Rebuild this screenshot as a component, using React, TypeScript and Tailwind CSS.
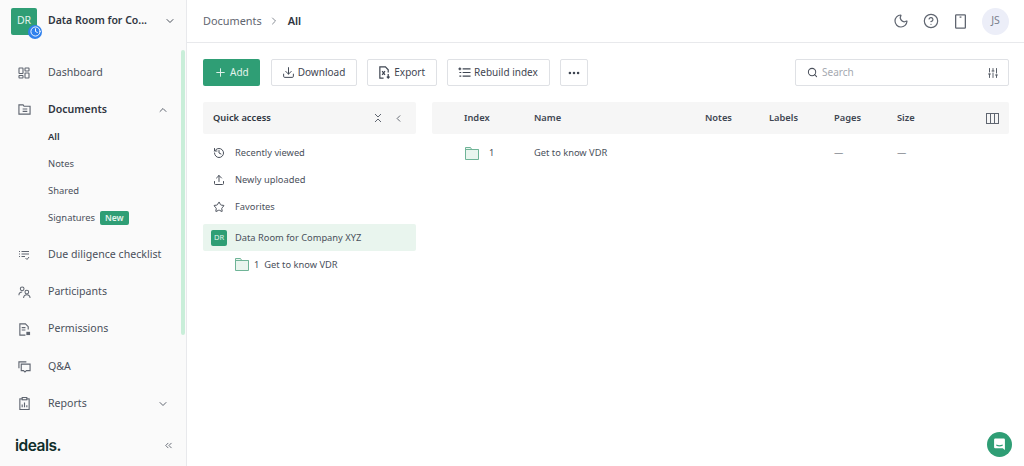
import {
  ChevronDown,
  ChevronLeft,
  ChevronRight,
  ChevronUp,
  ChevronsLeft,
  CircleHelp,
  Clock,
  Download,
  Ellipsis,
  History,
  Moon,
  Plus,
  Search,
  SlidersVertical,
  Star,
  Upload,
} from "lucide-react";

const font = "font-['Noto_Sans','Open_Sans',sans-serif]";

function FolderIcon({ className }: { className?: string }) {
  return (
    <svg viewBox="0 0 14 13" className={className} fill="none">
      <path d="M.5 12.500V.5h5l1.200 2h6.800v10z" fill="#e9f5ee" stroke="#6fb497" />
      <path d="M.5 2.500h13" stroke="#6fb497" />
    </svg>
  );
}

function DashboardIcon() {
  return (
    <svg viewBox="0 0 12 12" className="h-3 w-3" fill="none" stroke="#5f6570" strokeWidth="1.100">
      <rect x="1" y="1" width="4" height="5.500" rx=".4" />
      <rect x="7" y="1" width="4" height="3" rx=".4" />
      <rect x="1" y="8.500" width="4" height="2.500" rx=".4" />
      <rect x="7" y="6" width="4" height="5" rx=".4" />
    </svg>
  );
}

function DocIcon() {
  return (
    <svg viewBox="0 0 14 14" className="h-[13px] w-[13px]" fill="none" stroke="#5f6570" strokeWidth="1.200">
      <path d="M1 2h4.500l1 1.500H13v8.500H1z" />
      <path d="M5 6.500h5M5 9h5" />
    </svg>
  );
}

function ChecklistIcon() {
  return (
    <svg viewBox="0 0 12 12" className="h-3 w-3" fill="none" stroke="#5f6570" strokeWidth="1">
      <path d="M1 2.500h1M3.500 2.500H11M1 5h1M3.500 5H11M1 7.500h1M3.500 7.500H7" />
      <path d="M7.500 9l1.500 1.500L11 8" />
    </svg>
  );
}

function ParticipantsIcon() {
  return (
    <svg viewBox="0 0 14 14" className="h-[13px] w-[13px]" fill="none" stroke="#5f6570" strokeWidth="1.100">
      <circle cx="4.500" cy="3" r="2" />
      <path d="M1 10c0-2.500 1.500-3.500 3.500-3.500" />
      <circle cx="9.500" cy="6.500" r="2" />
      <path d="M6 13c.2-2.500 1.500-3.500 3.500-3.500s3.300 1 3.500 3.500" />
    </svg>
  );
}

function PermissionsIcon() {
  return (
    <svg viewBox="0 0 14 14" className="h-[13px] w-[13px]" fill="none" stroke="#5f6570" strokeWidth="1.200">
      <path d="M8 13H2V1h6l3 3v3" />
      <path d="M4 5h4M4 7.500h4" />
      <rect x="9" y="9.500" width="4" height="3.500" fill="#5f6570" stroke="none" />
    </svg>
  );
}

function QaIcon() {
  return (
    <svg viewBox="0 0 14 14" className="h-[13px] w-[13px]" fill="none" stroke="#5f6570" strokeWidth="1.200">
      <path d="M1 9V2h8" />
      <path d="M3.500 4.500H13v7H9l-1.500 1.500L6 11.500H3.500z" />
    </svg>
  );
}

function ReportsIcon() {
  return (
    <svg viewBox="0 0 14 14" className="h-[13px] w-[13px]" fill="none" stroke="#5f6570" strokeWidth="1.200">
      <rect x="2" y="2" width="10" height="11.500" />
      <rect x="4.500" y=".5" width="5" height="2.500" fill="#fafafa" />
      <path d="M4.500 11V8M7 11V6M9.500 11V9" />
    </svg>
  );
}

function ExportIcon() {
  return (
    <svg viewBox="0 0 14 14" className="h-[13px] w-[13px]" fill="none" stroke="#3f4652" strokeWidth="1.300">
      <path d="M6 13H2V1h6l3 3v3" />
      <path d="M4.500 5.500l3 4M7.500 5.500l-3 4" />
      <path d="M11 8.500V13M9.500 11.500l1.500 1.500 1.500-1.500" />
    </svg>
  );
}

function RebuildIcon() {
  return (
    <svg viewBox="0 0 14 14" className="h-[13px] w-[13px]" fill="none" stroke="#3f4652" strokeWidth="1.300">
      <path d="M5 3h8.500M5 7h8.500M5 11h8.500" />
      <path d="M.5 3h3M2 1.500v3M1.500 7h2M1.500 11h2" />
    </svg>
  );
}

function CollapseIcon() {
  return (
    <svg viewBox="0 0 12 12" className="h-3 w-3" fill="none" stroke="#5f6570" strokeWidth="1">
      <path d="M3 2l3 3 3-3M3 10l3-3 3 3" />
    </svg>
  );
}

function DeviceIcon() {
  return (
    <svg viewBox="0 0 12 16" className="h-[15px] w-[11px]" fill="none" stroke="#5f6570" strokeWidth="1.400">
      <rect x=".7" y=".7" width="10.600" height="14.600" rx=".8" />
      <path d="M5 3.200h2" />
    </svg>
  );
}

function ColumnsIcon() {
  return (
    <svg viewBox="0 0 13 13" className="h-[13px] w-[13px]" fill="none" stroke="#5f6570" strokeWidth="1">
      <rect x=".5" y="1.500" width="12" height="10" />
      <path d="M4.500 1.500v10M8.500 1.500v10" />
    </svg>
  );
}

function ChatIcon() {
  return (
    <svg viewBox="0 0 12 12" className="h-[13px] w-[13px]">
      <path d="M1 1.500A1 1 0 0 1 2 .5h8a1 1 0 0 1 1 1v9.500L9 9.500H2a1 1 0 0 1-1-1z" fill="#fff" />
      <path d="M3 6.500q3 1.500 6 0" stroke="#2f9e75" fill="none" />
    </svg>
  );
}

const navBottom = [
  { icon: <ChecklistIcon />, label: "Due diligence checklist" },
  { icon: <ParticipantsIcon />, label: "Participants" },
  { icon: <PermissionsIcon />, label: "Permissions" },
  { icon: <QaIcon />, label: "Q&A" },
  { icon: <ReportsIcon />, label: "Reports", chevron: true },
];

function NavRow({ icon, label, chevron }: { icon: React.ReactNode; label: string; chevron?: boolean }) {
  return (
    <div className="flex h-[37.250px] items-center pl-[18px] pr-[17px] text-[10.600px] text-[#4a505b]">
      <span className="flex w-[30px] shrink-0">{icon}</span>
      <span className="flex-1 whitespace-nowrap">{label}</span>
      {chevron && <ChevronDown className="h-3 w-3 text-[#5f6570]" />}
    </div>
  );
}

function Sidebar() {
  return (
    <aside className="relative flex w-[187px] shrink-0 flex-col border-r border-[#e8e9ec] bg-[#fafafa]">
      <div className="flex h-[42px] shrink-0 items-center pl-[11px] pr-[10px]">
        <div className="relative mr-[11px] flex h-[27px] w-[26px] items-center justify-center rounded-[2px] bg-[#2f9e75] text-[10.500px] text-[#e3f3ec]">
          DR
          <span className="absolute -bottom-[4px] -right-[5px] flex h-[14px] w-[14px] items-center justify-center rounded-full bg-[#2f80ed]">
            <Clock className="h-[11px] w-[11px] text-white" strokeWidth={2} />
          </span>
        </div>
        <span className="flex-1 whitespace-nowrap text-[10.500px] font-semibold text-[#2f3540]">Data Room for Co...</span>
        <ChevronDown className="h-3 w-3 text-[#4a505b]" />
      </div>

      <nav className="mt-[12px] flex flex-col">
        <NavRow icon={<DashboardIcon />} label="Dashboard" />
        <div className="flex h-[37px] items-center pl-[18px] pr-[17px] text-[10.600px] font-semibold text-[#2f3540]">
          <span className="flex w-[30px] shrink-0">
            <DocIcon />
          </span>
          <span className="flex-1">Documents</span>
          <ChevronUp className="h-3 w-3 text-[#5f6570]" />
        </div>
        <div className="-mt-[5px] mb-[5px] flex flex-col pl-[48px] text-[9.400px] text-[#4a505b]">
          <div className="flex h-[27px] items-center font-semibold text-[#2f3540]">All</div>
          <div className="flex h-[27px] items-center">Notes</div>
          <div className="flex h-[27px] items-center">Shared</div>
          <div className="flex h-[27px] items-center gap-[5px]">
            Signatures
            <span className="rounded-[2px] bg-[#2f9e75] px-[5px] text-[8.500px] font-semibold leading-[14px] text-[#e3f3ec]">New</span>
          </div>
        </div>
        {navBottom.map((n) => (
          <NavRow key={n.label} {...n} />
        ))}
      </nav>

      <div className="mt-auto flex h-[41px] items-center justify-between pl-[15px] pr-[12px]">
        <span className="font-['Inter',sans-serif] text-[15.500px] font-semibold tracking-[-0.5px] text-[#0f2e2a]">ideals.</span>
        <ChevronsLeft className="h-[11px] w-[11px] text-[#5f6570]" />
      </div>

      {/* overlay scrollbar */}
      <div className="absolute left-[181px] top-[50px] h-[285px] w-[4px] rounded-full bg-[#c9eed9]" />
    </aside>
  );
}

function ToolButton({ icon, label }: { icon: React.ReactNode; label: string }) {
  return (
    <button className="flex h-[27px] items-center gap-[3px] rounded-[2px] border border-[#dfe1e5] bg-white pl-[10px] pr-[11px] text-[10px] text-[#3f4652]">
      {icon}
      {label}
    </button>
  );
}

const columns = [
  { label: "Index", w: "w-[70px]" },
  { label: "Name", w: "w-[171px]" },
  { label: "Notes", w: "w-[64px]" },
  { label: "Labels", w: "w-[65px]" },
  { label: "Pages", w: "w-[63px]" },
  { label: "Size", w: "w-[60px]" },
];

export default function App() {
  return (
    <div className={`${font} flex h-[466px] w-[1024px] overflow-hidden bg-white`}>
      <Sidebar />
      <main className="relative flex min-w-0 flex-1 flex-col">
        <header className="flex h-[43px] shrink-0 items-center border-b border-[#e8e9ec] pl-[16px] pr-[15px]">
          <span className="text-[10.900px] text-[#5f6570]">Documents</span>
          <ChevronRight className="ml-[6px] mr-[8px] h-3 w-3 text-[#5f6570]" strokeWidth={1.5} />
          <span className="text-[10.900px] font-semibold text-[#2f3540]">All</span>
          <div className="ml-auto flex items-center">
            <Moon className="h-[16px] w-[16px] text-[#5f6570]" strokeWidth={1.8} />
            <CircleHelp className="ml-[14px] h-[16px] w-[16px] text-[#5f6570]" strokeWidth={1.8} />
            <span className="ml-[16px] flex">
              <DeviceIcon />
            </span>
            <span className="ml-[16px] flex h-[27px] w-[27px] items-center justify-center rounded-full bg-[#eceef8] text-[10.500px] text-[#7a808c]">JS</span>
          </div>
        </header>

        <div className="mt-[16px] flex items-center pl-[16px] pr-[15px]">
          <button className="flex h-[27px] items-center gap-[3px] rounded-[2px] bg-[#2f9e75] pl-[11px] pr-[11px] text-[10px] text-[#e3f3ec]">
            <Plus className="h-[13px] w-[13px]" strokeWidth={1.8} />
            Add
          </button>
          <div className="ml-[11px] flex gap-[10px]">
            <ToolButton icon={<Download className="h-[13px] w-[13px]" strokeWidth={1.8} />} label="Download" />
            <ToolButton icon={<ExportIcon />} label="Export" />
            <ToolButton icon={<RebuildIcon />} label="Rebuild index" />
            <button className="flex h-[27px] w-[28px] items-center justify-center rounded-[2px] border border-[#dfe1e5] bg-white text-[#3f4652]">
              <Ellipsis className="h-[14px] w-[14px]" strokeWidth={2.4} />
            </button>
          </div>
          <div className="ml-auto flex h-[27px] w-[214px] items-center rounded-[2px] border border-[#dfe1e5] bg-white pl-[11px] pr-[9px]">
            <Search className="h-[11px] w-[11px] text-[#4a505b]" strokeWidth={2.2} />
            <span className="ml-[4px] flex-1 text-[10px] text-[#a5a9b1]">Search</span>
            <SlidersVertical className="h-[12px] w-[12px] text-[#4a505b]" strokeWidth={1.8} />
          </div>
        </div>

        <div className="mt-[16px] flex flex-1 pl-[16px] pr-[15px]">
          <section className="w-[213px] shrink-0">
            <div className="flex h-[32px] items-center rounded-[2px] bg-[#f6f6f6] pl-[10px] pr-[12px] text-[9.300px] font-semibold text-[#2f3540]">
              <span className="flex-1">Quick access</span>
              <CollapseIcon />
              <ChevronLeft className="ml-[9px] h-[11px] w-[11px] text-[#4a505b]" strokeWidth={1.8} />
            </div>
            <div className="mt-[5px] flex flex-col text-[9.300px] text-[#4a505b]">
              <div className="flex h-[27px] items-center pl-[10px]">
                <History className="mr-[10px] h-[12px] w-[12px]" strokeWidth={2} />
                Recently viewed
              </div>
              <div className="flex h-[27px] items-center pl-[10px]">
                <Upload className="mr-[10px] h-[12px] w-[12px]" strokeWidth={2} />
                Newly uploaded
              </div>
              <div className="flex h-[27px] items-center pl-[10px]">
                <Star className="mr-[10px] h-[12px] w-[12px]" strokeWidth={2} />
                Favorites
              </div>
              <div className="mt-[4px] flex h-[27px] items-center rounded-[2px] bg-[#e9f5ee] pl-[8px]">
                <span className="mr-[8px] flex h-[16px] w-[16px] items-center justify-center rounded-[2px] bg-[#2f9e75] text-[7.500px] text-[#e3f3ec]">DR</span>
                Data Room for Company XYZ
              </div>
              <div className="flex h-[27px] items-center pl-[32px]">
                <FolderIcon className="mr-[5px] h-[13px] w-[14px]" />
                <span className="mr-[5px]">1</span>
                Get to know VDR
              </div>
            </div>
          </section>

          <section className="ml-[16px] min-w-0 flex-1">
            <div className="flex h-[32px] items-center rounded-[2px] bg-[#f6f6f6] pl-[32px] pr-[10px] text-[9.300px] font-semibold text-[#3f4652]">
              {columns.map((c) => (
                <span key={c.label} className={c.w}>
                  {c.label}
                </span>
              ))}
              <span className="ml-auto flex">
                <ColumnsIcon />
              </span>
            </div>
            <div className="flex h-[38px] items-center pl-[33px] text-[9.300px] text-[#4a505b]">
              <span className="flex w-[69px] items-center">
                <FolderIcon className="h-[13px] w-[14px]" />
                <span className="ml-[10px]">1</span>
              </span>
              <span className="w-[171px]">Get to know VDR</span>
              <span className="w-[64px]" />
              <span className="w-[65px]" />
              <span className="w-[63px]">—</span>
              <span className="w-[60px]">—</span>
            </div>
          </section>
        </div>

        <span className="absolute bottom-[9px] right-[12px] flex h-[25px] w-[25px] items-center justify-center rounded-full bg-[#2f9e75]">
          <ChatIcon />
        </span>
      </main>
    </div>
  );
}
